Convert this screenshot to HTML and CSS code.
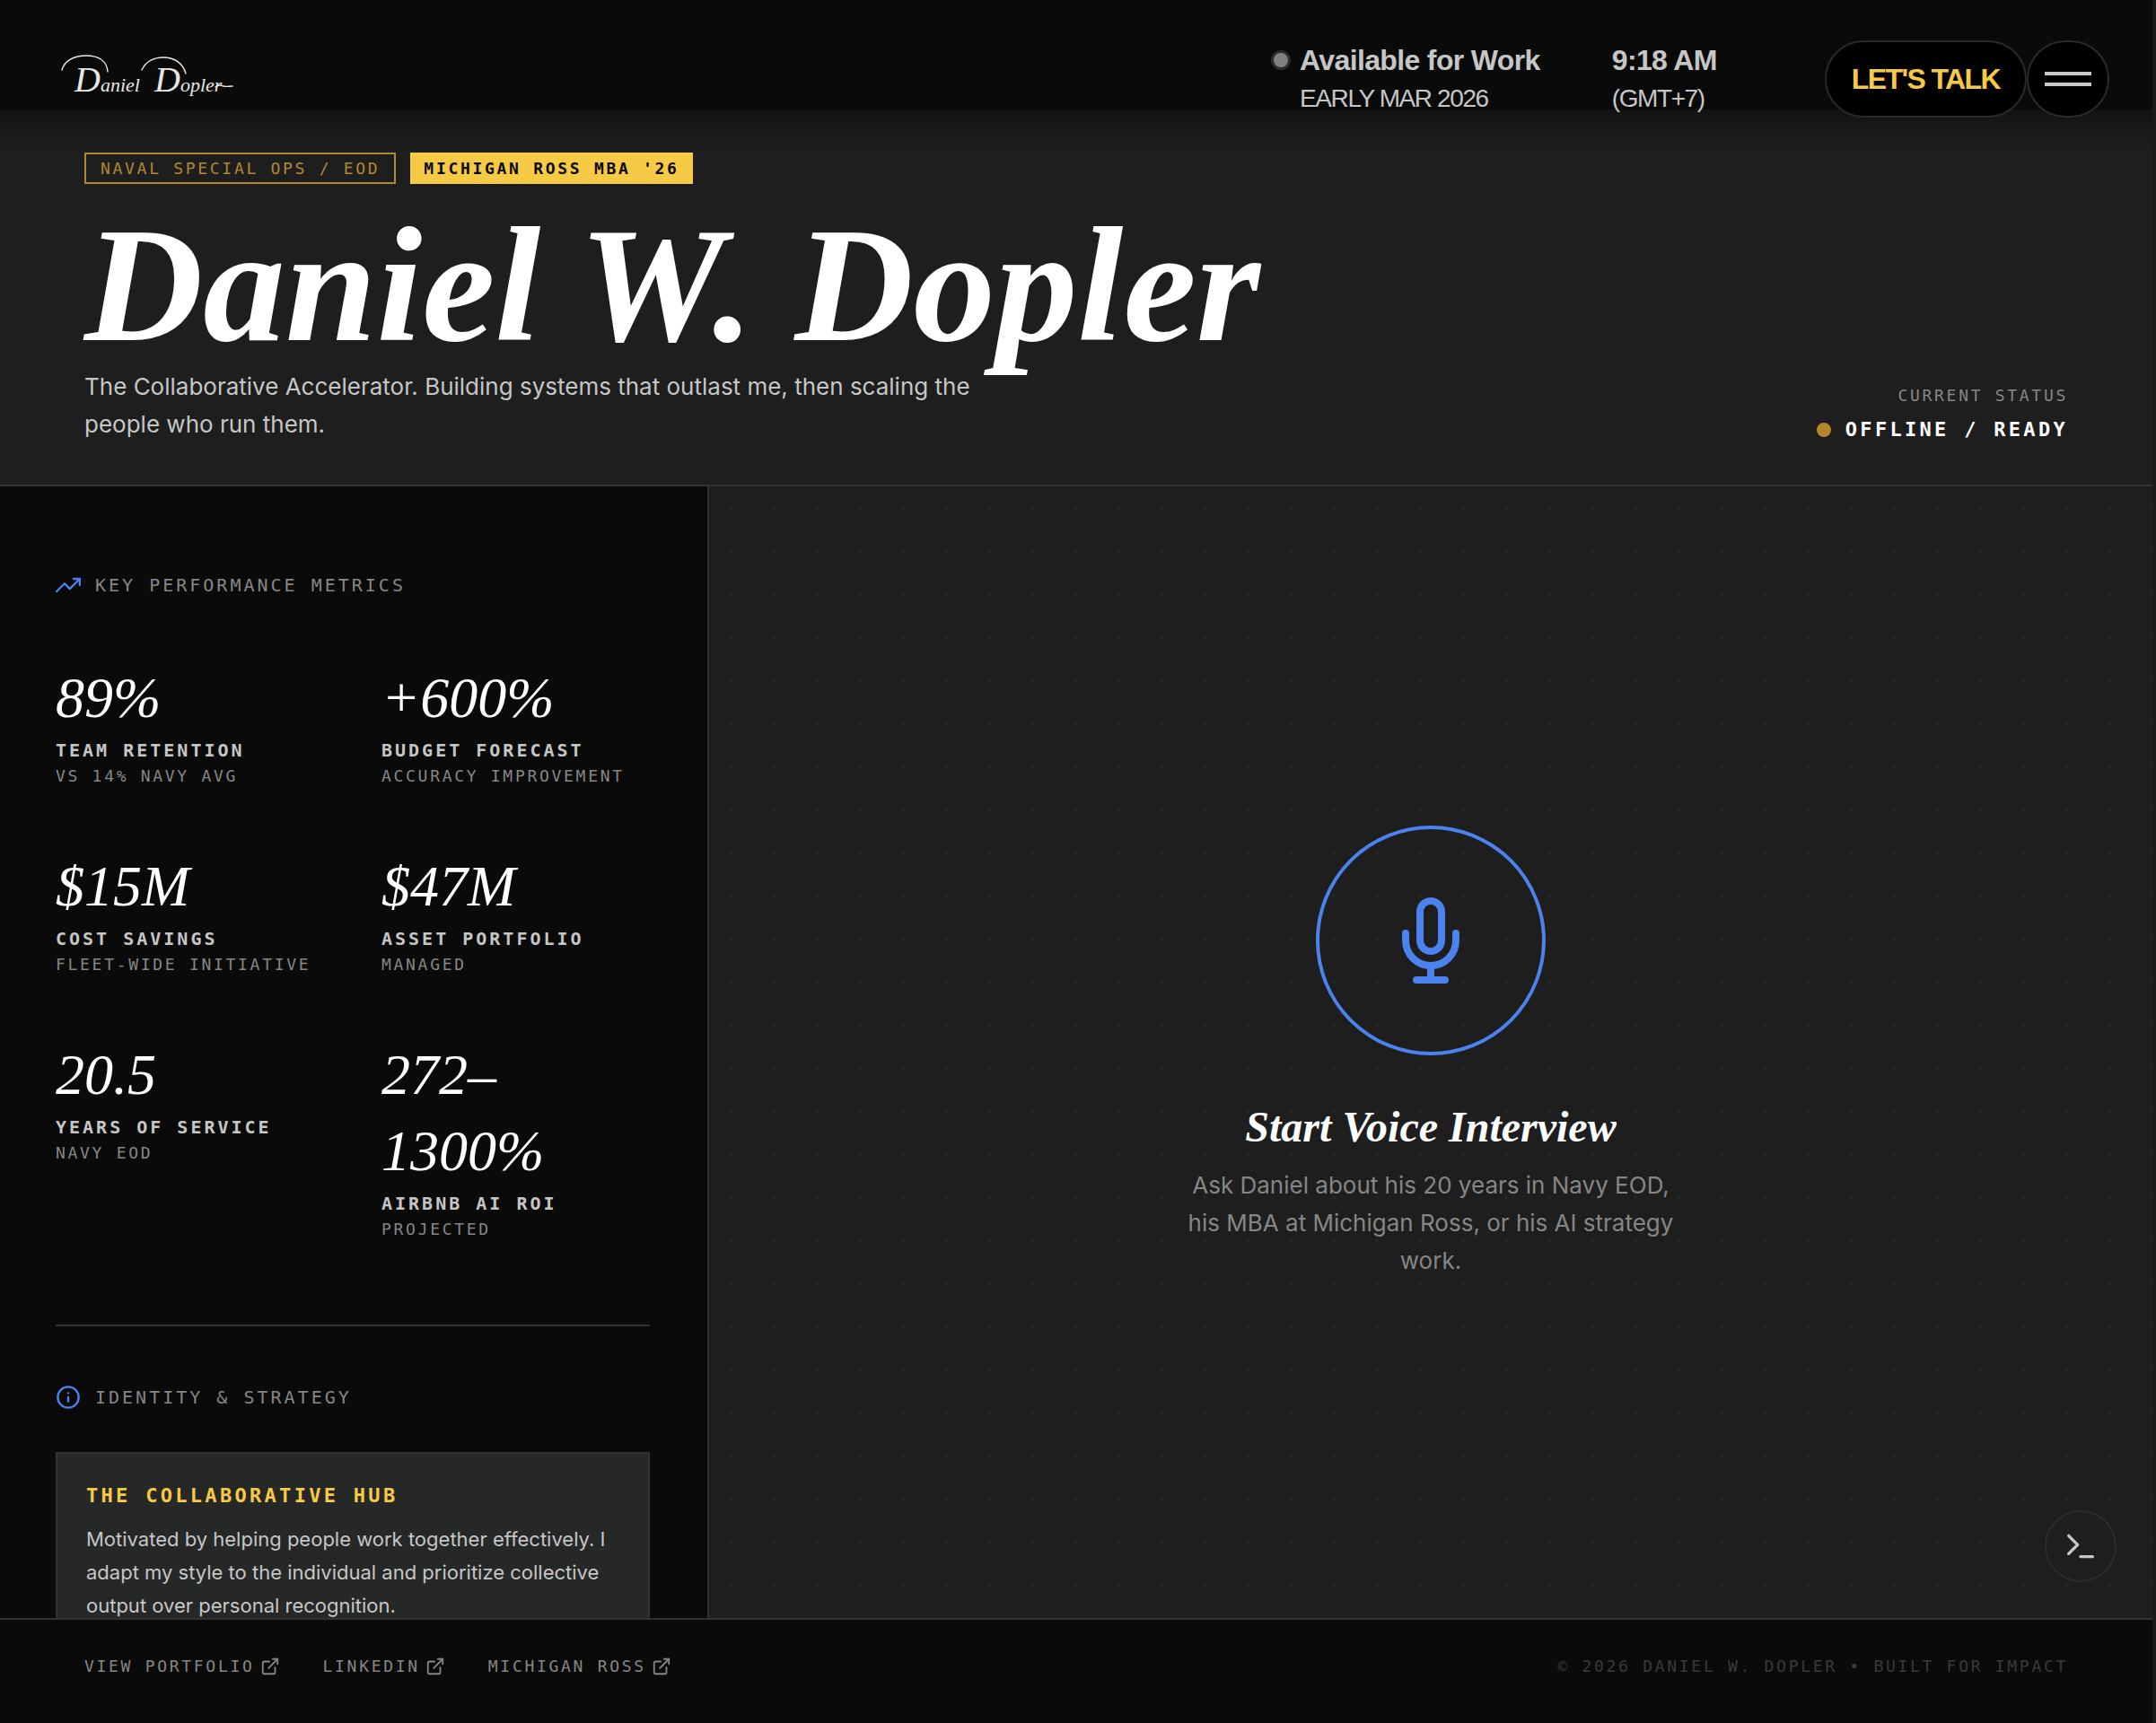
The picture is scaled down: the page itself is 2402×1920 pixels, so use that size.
FILE: index.html
```html
<!DOCTYPE html>
<html lang="en">
<head>
    <meta charset="UTF-8">
    <meta name="viewport" content="width=device-width, initial-scale=1.0">
    <title>Daniel W. Dopler</title>
    <link rel="stylesheet" href="styles.css">
</head>
<body>
    <nav class="site-nav">
        <a href="#" class="logo">
            <svg width="192" height="60" viewBox="0 0 192 60" role="img" aria-label="Daniel Dopler">
                <g fill="none" stroke="#e8e8e8" stroke-width="1.4" stroke-linecap="round">
                    <path d="M1 17C4 6 15 1 28 1c14 0 23 6 24 18"/>
                    <path d="M90 17C94 8 103 3 114 3c13 0 22 7 25 18"/>
                    <path d="M172 36c4-3 6-2 9-1s6 0 10 0"/>
                </g>
                <text class="logo-text" x="15" y="41"><tspan class="logo-cap">D</tspan>aniel</text>
                <text class="logo-text" x="104" y="41"><tspan class="logo-cap">D</tspan>opler</text>
            </svg>
        </a>

        <div class="nav-right">
            <div class="nav-status">
                <span class="nav-dot"></span>
                <div>
                    <p class="nav-strong">Available for Work</p>
                    <p class="nav-light">EARLY MAR 2026</p>
                </div>
            </div>
            <div class="nav-time">
                <p class="nav-strong">9:18 AM</p>
                <p class="nav-light">(GMT+7)</p>
            </div>
            <button class="talk-btn">LET'S TALK</button>
            <button class="menu-btn" aria-label="Menu"><span></span><span></span></button>
        </div>
    </nav>

    <header class="hero">
        <div class="badges">
            <span class="badge">NAVAL SPECIAL OPS / EOD</span>
            <span class="badge badge-solid">MICHIGAN ROSS MBA '26</span>
        </div>
        <h1>Daniel W. Dopler</h1>
        <div class="hero-bottom">
            <p class="tagline">The Collaborative Accelerator. Building systems that outlast me, then scaling the people who run them.</p>
            <div class="status">
                <p class="status-label">CURRENT STATUS</p>
                <p class="status-value"><span class="status-dot"></span>OFFLINE / READY</p>
            </div>
        </div>
    </header>

    <main>
        <aside class="sidebar">
            <section class="metrics-section">
                <h2 class="section-title">
                    <svg width="28" height="28" viewBox="0 0 24 24" class="icon">
                        <polyline points="23 6 13.500 15.500 8.500 10.500 1 18"/>
                        <polyline points="17 6 23 6 23 12"/>
                    </svg>
                    KEY PERFORMANCE METRICS
                </h2>
                <div class="metrics">
                    <div class="metric">
                        <p class="metric-value">89%</p>
                        <p class="metric-label">TEAM RETENTION</p>
                        <p class="metric-note">VS 14% NAVY AVG</p>
                    </div>
                    <div class="metric">
                        <p class="metric-value">+600%</p>
                        <p class="metric-label">BUDGET FORECAST</p>
                        <p class="metric-note">ACCURACY IMPROVEMENT</p>
                    </div>
                    <div class="metric">
                        <p class="metric-value">$15M</p>
                        <p class="metric-label">COST SAVINGS</p>
                        <p class="metric-note">FLEET-WIDE INITIATIVE</p>
                    </div>
                    <div class="metric">
                        <p class="metric-value">$47M</p>
                        <p class="metric-label">ASSET PORTFOLIO</p>
                        <p class="metric-note">MANAGED</p>
                    </div>
                    <div class="metric">
                        <p class="metric-value">20.5</p>
                        <p class="metric-label">YEARS OF SERVICE</p>
                        <p class="metric-note">NAVY EOD</p>
                    </div>
                    <div class="metric">
                        <p class="metric-value">272–<wbr>1300%</p>
                        <p class="metric-label">AIRBNB AI ROI</p>
                        <p class="metric-note">PROJECTED</p>
                    </div>
                </div>
            </section>

            <section class="identity-section">
                <h2 class="section-title">
                    <svg width="28" height="28" viewBox="0 0 24 24" class="icon">
                        <circle cx="12" cy="12" r="10"/>
                        <line x1="12" y1="16" x2="12" y2="12"/>
                        <line x1="12" y1="8" x2="12" y2="8"/>
                    </svg>
                    IDENTITY &amp; STRATEGY
                </h2>
                <div class="card">
                    <h3>THE COLLABORATIVE HUB</h3>
                    <p>Motivated by helping people work together effectively. I adapt my style to the individual and prioritize collective output over personal recognition.</p>
                </div>
            </section>
        </aside>

        <section class="voice">
            <button class="mic-btn" aria-label="Start Voice Interview">
                <svg width="96" height="96" viewBox="0 0 24 24" class="icon">
                    <path d="M12 1a3 3 0 0 0-3 3v8a3 3 0 0 0 6 0V4a3 3 0 0 0-3-3z"/>
                    <path d="M19 10v2a7 7 0 0 1-14 0v-2"/>
                    <line x1="12" y1="19" x2="12" y2="23"/>
                    <line x1="8" y1="23" x2="16" y2="23"/>
                </svg>
            </button>
            <h2>Start Voice Interview</h2>
            <p>Ask Daniel about his 20 years in Navy EOD, his MBA at Michigan Ross, or his AI strategy work.</p>

            <button class="terminal-btn" aria-label="Open terminal">
                <svg width="40" height="40" viewBox="0 0 24 24" class="icon">
                    <polyline points="4 17 10 11 4 5"/>
                    <line x1="12" y1="19" x2="20" y2="19"/>
                </svg>
            </button>
        </section>
    </main>

    <footer>
        <div class="footer-links">
            <a href="#">VIEW PORTFOLIO
                <svg width="22" height="22" viewBox="0 0 24 24" class="icon"><path d="M18 13v6a2 2 0 0 1-2 2H5a2 2 0 0 1-2-2V8a2 2 0 0 1 2-2h6"/><polyline points="15 3 21 3 21 9"/><line x1="10" y1="14" x2="21" y2="3"/></svg>
            </a>
            <a href="#">LINKEDIN
                <svg width="22" height="22" viewBox="0 0 24 24" class="icon"><path d="M18 13v6a2 2 0 0 1-2 2H5a2 2 0 0 1-2-2V8a2 2 0 0 1 2-2h6"/><polyline points="15 3 21 3 21 9"/><line x1="10" y1="14" x2="21" y2="3"/></svg>
            </a>
            <a href="#">MICHIGAN ROSS
                <svg width="22" height="22" viewBox="0 0 24 24" class="icon"><path d="M18 13v6a2 2 0 0 1-2 2H5a2 2 0 0 1-2-2V8a2 2 0 0 1 2-2h6"/><polyline points="15 3 21 3 21 9"/><line x1="10" y1="14" x2="21" y2="3"/></svg>
            </a>
        </div>
        <p class="copyright">© 2026 DANIEL W. DOPLER • BUILT FOR IMPACT</p>
    </footer>
</body>
</html>
```

FILE: styles.css
```css
:root {
    --black: #0a0a0a;
    --panel: #1e1e1e;
    --line: #323232;
    --text: #c6c6c6;
    --muted: #868686;
    --blue: #4c82ee;
    --yellow: #f7ca45;
    --gold: #b3872f;
    --sans: Inter, "Liberation Sans", sans-serif;
    --grotesk: "Liberation Sans", sans-serif;
    --serif: "Liberation Serif", serif;
    --mono: "DejaVu Sans Mono", "Liberation Mono", monospace;
}

* {
    margin: 0;
    padding: 0;
    box-sizing: border-box;
}

body {
    height: 100vh;
    display: flex;
    flex-direction: column;
    padding-top: 122px;
    border-right: 4px solid #1a1a1a;
    background-color: var(--black);
    color: var(--text);
    font-family: var(--sans);
    overflow: hidden;
}

button {
    font-family: inherit;
    color: inherit;
    cursor: pointer;
}

.icon {
    fill: none;
    stroke: currentColor;
    stroke-width: 2;
    stroke-linecap: round;
    stroke-linejoin: round;
    flex-shrink: 0;
}

/* Navigation, lies over the top of the hero */
.site-nav {
    position: absolute;
    top: 0;
    left: 0;
    right: 4px;
    height: 168px;
    padding: 45px 48px 0 68px;
    display: flex;
    justify-content: space-between;
    align-items: flex-start;
    background: linear-gradient(var(--black) 50%, transparent);
}

.logo {
    padding-top: 16px;
}

.logo svg {
    display: block;
}

.logo-text {
    font-family: var(--serif);
    font-style: italic;
    font-size: 22px;
    fill: #e8e8e8;
}

.logo-cap {
    font-size: 40px;
}

.nav-right {
    display: flex;
    font-family: var(--grotesk);
}

.nav-status {
    display: flex;
    margin-right: 80px;
}

.nav-dot {
    width: 22px;
    height: 22px;
    margin: 11px 10px 0 0;
    border-radius: 50%;
    border: 3px solid #2c2c2c;
    background-color: #7f817f;
}

.nav-time {
    margin-right: 120px;
}

.nav-strong {
    font-size: 32px;
    line-height: 44px;
    font-weight: 700;
    letter-spacing: -0.02em;
}

.nav-light {
    font-size: 28px;
    line-height: 42px;
    font-weight: 400;
    letter-spacing: -0.05em;
}

.talk-btn,
.menu-btn {
    height: 86px;
    background-color: #000;
    border: 2px solid #2a2a2a;
    border-radius: 46px;
}

.talk-btn {
    padding: 0 28px;
    font-size: 32px;
    font-weight: 700;
    letter-spacing: -0.05em;
    color: var(--yellow);
}

.menu-btn {
    width: 92px;
    display: flex;
    flex-direction: column;
    align-items: center;
    justify-content: center;
    gap: 8px;
}

.menu-btn span {
    width: 52px;
    height: 4px;
    background-color: #c8c8c8;
}

/* Hero */
.hero {
    flex-shrink: 0;
    padding: 48px 94px 46px;
    background-color: var(--panel);
    border-bottom: 2px solid var(--line);
}

.badges {
    display: flex;
    gap: 16px;
}

.badge {
    height: 35px;
    padding: 0 16px;
    border: 2px solid var(--gold);
    color: var(--gold);
    font-family: var(--mono);
    font-size: 18px;
    line-height: 32px;
    letter-spacing: 0.15em;
}

.badge-solid {
    padding: 0 13px;
    border-color: var(--yellow);
    background-color: var(--yellow);
    color: var(--black);
    font-weight: 700;
}

h1 {
    margin: 33px 0 12px;
    font-family: var(--serif);
    font-style: italic;
    font-weight: 700;
    font-size: 183px;
    line-height: 160px;
    color: #fff;
}

.hero-bottom {
    display: flex;
    justify-content: space-between;
    align-items: flex-end;
}

.tagline {
    max-width: 1024px;
    font-size: 26px;
    line-height: 42px;
}

.status {
    text-align: right;
    font-family: var(--mono);
}

.status-label {
    margin-bottom: 10px;
    font-size: 18px;
    line-height: 26px;
    letter-spacing: 0.15em;
    color: var(--muted);
}

.status-value {
    display: flex;
    align-items: center;
    gap: 16px;
    font-size: 22px;
    line-height: 30px;
    font-weight: 700;
    letter-spacing: 0.15em;
    color: #fff;
}

.status-dot {
    width: 16px;
    height: 16px;
    border-radius: 50%;
    background-color: var(--gold);
}

/* Main area */
main {
    flex: 1;
    min-height: 0;
    display: grid;
    grid-template-columns: 790px 1fr;
}

.sidebar {
    padding: 95px 64px 0 62px;
    border-right: 2px solid var(--line);
    overflow: hidden;
}

.section-title {
    display: flex;
    align-items: center;
    gap: 16px;
    font-family: var(--mono);
    font-size: 20px;
    line-height: 30px;
    font-weight: 400;
    letter-spacing: 0.15em;
    color: var(--muted);
}

.section-title .icon {
    color: var(--blue);
}

.metrics-section {
    padding-bottom: 92px;
    border-bottom: 2px solid var(--line);
}

.metrics {
    display: grid;
    grid-template-columns: 1fr 1fr;
    gap: 66px 64px;
    margin-top: 68px;
}

.metric-value {
    margin-bottom: 2px;
    font-family: var(--serif);
    font-style: italic;
    font-size: 64px;
    line-height: 85px;
    color: #fff;
}

.metric-label,
.metric-note {
    font-family: var(--mono);
    letter-spacing: 0.15em;
    white-space: nowrap;
}

.metric-label {
    font-size: 20px;
    line-height: 29px;
    font-weight: 700;
}

.metric-note {
    font-size: 18px;
    line-height: 28px;
    color: var(--muted);
}

.identity-section {
    padding-top: 64px;
}

.card {
    margin-top: 46px;
    padding: 32px;
    background-color: #262828;
    border: 2px solid var(--line);
}

.card h3 {
    margin-bottom: 15px;
    font-family: var(--mono);
    font-size: 22px;
    line-height: 30px;
    letter-spacing: 0.15em;
    color: var(--yellow);
}

.card p {
    font-size: 22px;
    line-height: 37px;
}

/* Voice panel */
.voice {
    position: relative;
    display: flex;
    flex-direction: column;
    align-items: center;
    justify-content: center;
    background-color: var(--panel);
    background-image: radial-gradient(circle, #252525 2px, transparent 2px);
    background-size: 48px 48px;
    text-align: center;
}

.mic-btn {
    width: 256px;
    height: 256px;
    display: flex;
    align-items: center;
    justify-content: center;
    border: 4px solid var(--blue);
    border-radius: 50%;
    background: none;
    color: var(--blue);
}

.voice h2 {
    margin: 48px 0 12px;
    font-family: var(--serif);
    font-style: italic;
    font-size: 48px;
    line-height: 64px;
    color: #fff;
}

.voice p {
    max-width: 560px;
    font-size: 26px;
    line-height: 42px;
    color: var(--muted);
}

.terminal-btn {
    position: absolute;
    right: 40px;
    bottom: 40px;
    width: 80px;
    height: 80px;
    display: flex;
    align-items: center;
    justify-content: center;
    border: 2px solid #2c2c2c;
    border-radius: 50%;
    background-color: var(--panel);
}

/* Footer */
footer {
    flex-shrink: 0;
    display: flex;
    justify-content: space-between;
    align-items: center;
    padding: 36px 94px 47px;
    border-top: 2px solid var(--line);
    font-family: var(--mono);
    font-size: 18px;
    line-height: 32px;
}

.footer-links {
    display: flex;
    gap: 48px;
}

.footer-links a {
    display: flex;
    align-items: center;
    gap: 6px;
    letter-spacing: 0.15em;
    color: var(--muted);
    text-decoration: none;
}

.copyright {
    letter-spacing: 0.15em;
    color: #3a3a3a;
}
```
